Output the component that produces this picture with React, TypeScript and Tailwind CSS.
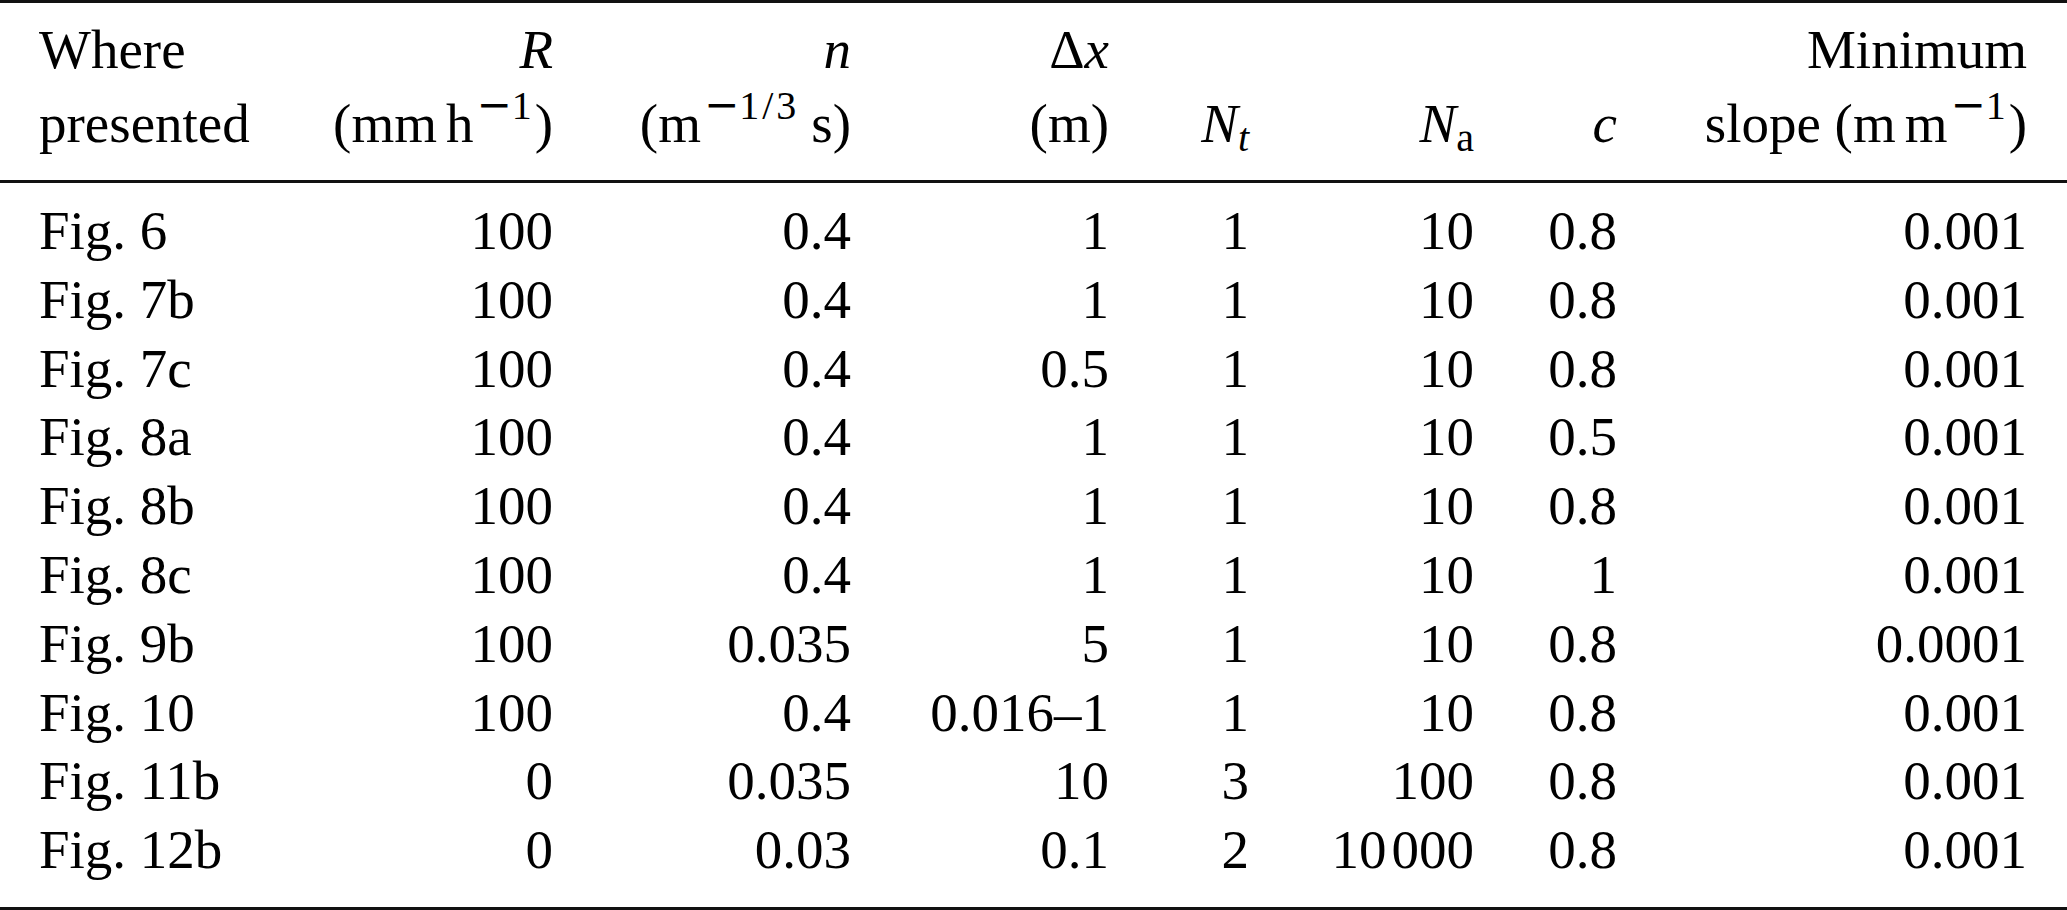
import type { ReactNode } from "react";

// ── layout ───────────────────────────────────────────────────────────────────

const GRID =
  "grid grid-cols-[261px_253px_298px_258px_140px_225px_143px_410px]";

type Row = [string, string, string, string, string, ReactNode, string, string];

const ROWS: Row[] = [
  ["Fig. 6", "100", "0.4", "1", "1", "10", "0.8", "0.001"],
  ["Fig. 7b", "100", "0.4", "1", "1", "10", "0.8", "0.001"],
  ["Fig. 7c", "100", "0.4", "0.5", "1", "10", "0.8", "0.001"],
  ["Fig. 8a", "100", "0.4", "1", "1", "10", "0.5", "0.001"],
  ["Fig. 8b", "100", "0.4", "1", "1", "10", "0.8", "0.001"],
  ["Fig. 8c", "100", "0.4", "1", "1", "10", "1", "0.001"],
  ["Fig. 9b", "100", "0.035", "5", "1", "10", "0.8", "0.0001"],
  ["Fig. 10", "100", "0.4", "0.016–1", "1", "10", "0.8", "0.001"],
  ["Fig. 11b", "0", "0.035", "10", "3", "100", "0.8", "0.001"],
  [
    "Fig. 12b",
    "0",
    "0.03",
    "0.1",
    "2",
    <>
      10<span className="ml-[5px]">000</span>
    </>,
    "0.8",
    "0.001",
  ],
];

// ── small pieces ─────────────────────────────────────────────────────────────

// superscript with a wide math minus; line-height 0 so the row keeps its height
function Sup({ children }: { children: ReactNode }) {
  return (
    <span className="pl-[3px] align-[23px] text-[40px] leading-[0]">
      <span className="font-['DejaVu_Serif',serif] text-[42px]">−</span>
      <span className="tracking-[3px]">{children}</span>
    </span>
  );
}

function Sub({ children, italic }: { children: ReactNode; italic?: boolean }) {
  return (
    <span
      className={
        italic
          ? "align-[-9px] text-[40px] leading-[0] italic"
          : "align-[-9px] text-[40px] leading-[0]"
      }
    >
      {children}
    </span>
  );
}

function Rule() {
  return <div className="h-[3px] w-full bg-[#111]" />;
}

// ── page ─────────────────────────────────────────────────────────────────────

export default function App() {
  return (
    <main className="min-h-screen w-full bg-white font-['Liberation_Serif','Times_New_Roman',serif] text-[55px] text-black">
      <Rule />

      {/* header */}
      <div className={`${GRID} px-[39px] pb-[19px] pt-[10px] leading-[74px]`}>
        <div>Where</div>
        <div className="text-right italic">R</div>
        <div className="text-right italic">n</div>
        <div className="text-right">
          Δ<span className="italic">x</span>
        </div>
        <div />
        <div />
        <div />
        <div className="text-right">Minimum</div>

        <div>presented</div>
        <div className="text-right">
          (mm<span className="ml-[9px]">h</span>
          <Sup>1</Sup>)
        </div>
        <div className="text-right">
          (m<Sup>1/3</Sup>
          <span className="ml-[12px]">s)</span>
        </div>
        <div className="text-right">(m)</div>
        <div className="text-right">
          <span className="italic">N</span>
          <Sub italic>t</Sub>
        </div>
        <div className="text-right">
          <span className="italic">N</span>
          <Sub>a</Sub>
        </div>
        <div className="text-right italic">c</div>
        <div className="text-right">
          slope (m<span className="ml-[9px]">m</span>
          <Sup>1</Sup>)
        </div>
      </div>

      <Rule />

      {/* body */}
      <div className="flex flex-col px-[39px] pb-[22px] pt-[14px] leading-[68.8px]">
        {ROWS.map((row, i) => (
          <div key={i} className={GRID}>
            {row.map((cell, j) => (
              <div key={j} className={j === 0 ? "" : "text-right"}>
                {cell}
              </div>
            ))}
          </div>
        ))}
      </div>

      <Rule />
    </main>
  );
}
